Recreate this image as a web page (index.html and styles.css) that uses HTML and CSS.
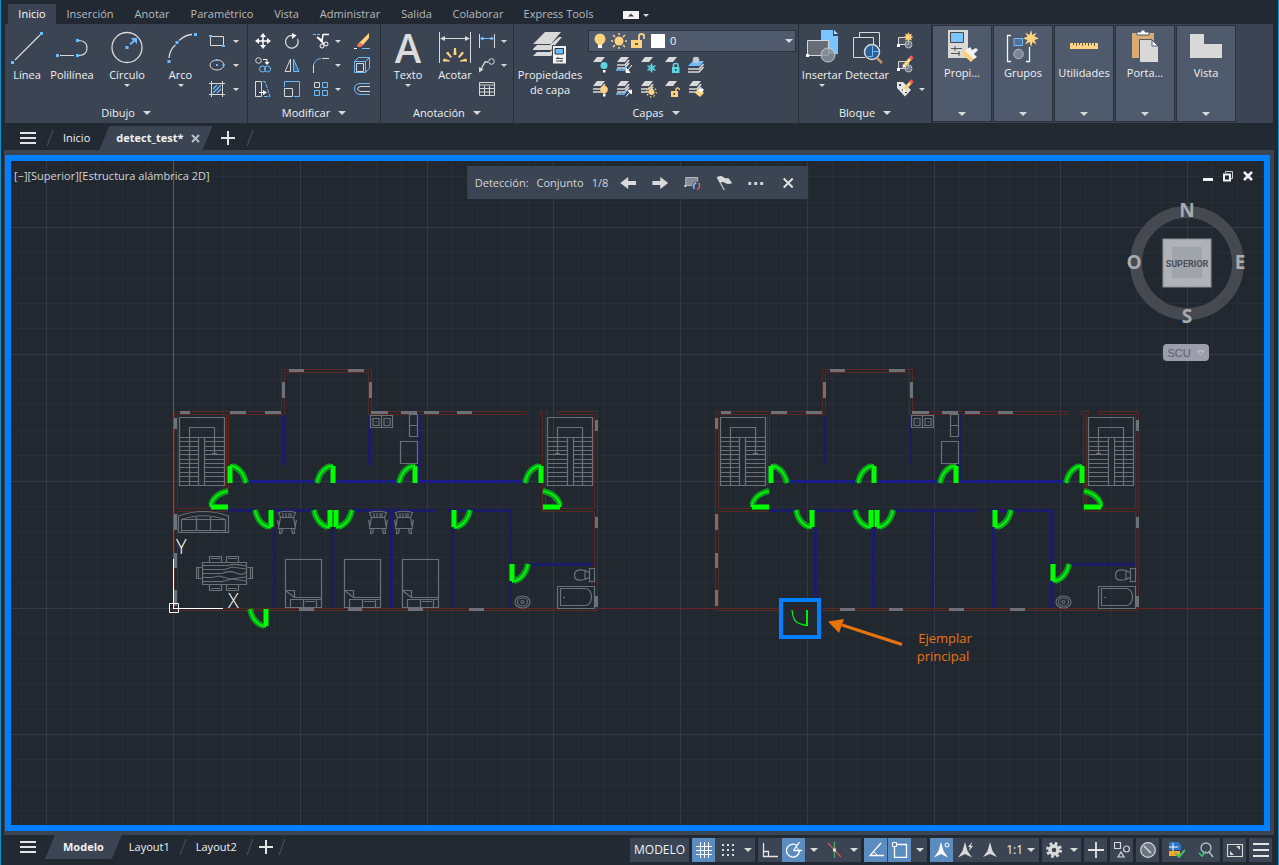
FILE: index.html
```html
<!DOCTYPE html>
<html lang="es">
<head>
<meta charset="utf-8">
<meta name="viewport" content="width=device-width, initial-scale=1">
<title>detect_test</title>
<link rel="stylesheet" href="styles.css">
</head>
<body>
<svg class="defs" width="0" height="0" aria-hidden="true">
  <defs>
    <symbol id="caret" viewBox="0 0 8 4"><path d="M0 0H8L4 4Z" fill="#d9d9d9"/></symbol>
    <symbol id="layers" viewBox="0 0 16 16">
      <path d="M5 1H13L9 6H1Z" fill="#d9d9d9"/><path d="M1 9H9L13 4M1 12H9L13 7" fill="none" stroke="#d9d9d9" stroke-width="1.6"/>
    </symbol>
    <symbol id="sheet" viewBox="0 0 16 16"><path d="M5 2H13L9 7H1Z" fill="#d9d9d9"/></symbol>
    <symbol id="pencil" viewBox="0 0 16 16">
      <path d="M6 11L13 3" stroke="#ffd27f" stroke-width="3.4"/><path d="M12 4L14.500 1.500" stroke="#ff5a4f" stroke-width="3.600"/><path d="M4.500 12.800L5 9.600 8 12Z" fill="#fff"/>
    </symbol>
    <symbol id="blockmini" viewBox="0 0 16 16">
      <path d="M1.500 4.500H11.500V11.500H1.500Z" fill="#4c5563" stroke="#d9d9d9"/><rect x="0" y="11" width="3" height="3" fill="#fff"/><circle cx="11.500" cy="11.500" r="3.500" fill="#8b929c" fill-opacity=".7" stroke="#b9bdc3"/>
    </symbol>
    <symbol id="menu" viewBox="0 0 16 12"><path d="M0 1H16M0 6H16M0 11H16" stroke="#e4e4e4" stroke-width="2"/></symbol>
    <symbol id="plus" viewBox="0 0 16 16"><path d="M8 1V15M1 8H15" stroke="#e4e4e4" stroke-width="2"/></symbol>
    <symbol id="slash" viewBox="0 0 8 16"><path d="M1 16L7 0" stroke="#4b5361"/></symbol>
    <symbol id="ucs" viewBox="0 0 16 16"><path d="M8 0L10.500 9 15 15 8 12 1 15 5.500 9Z" fill="#d9d9d9"/></symbol>

    <pattern id="grid" patternUnits="userSpaceOnUse" x="46" y="227" width="507" height="507">
      <path class="minor" d="M25.500 0V507M51.500 0V507M76.500 0V507M101.500 0V507M152.500 0V507M177.500 0V507M203.500 0V507M228.500 0V507M279.500 0V507M304.500 0V507M330.500 0V507M355.500 0V507M406.500 0V507M431.500 0V507M456.500 0V507M482.500 0V507"/>
      <path class="minor" d="M0 25.500H507M0 51.500H507M0 76.500H507M0 101.500H507M0 152.500H507M0 177.500H507M0 203.500H507M0 228.500H507M0 279.500H507M0 304.500H507M0 330.500H507M0 355.500H507M0 406.500H507M0 431.500H507M0 456.500H507M0 482.500H507"/>
      <path class="major" d="M.5 0V507M127.500 0V507M254.500 0V507M381.500 0V507M0 .5H507M0 127.500H507M0 254.500H507M0 381.500H507"/>
    </pattern>

    <g id="door">
      <path class="door-glow" d="M0 1V-16M2 -16Q13 -13 16 1"/>
      <path class="door-leaf" d="M0 1V-16"/><path class="door-arc" d="M0 -17Q13 -14 16 1"/>
    </g>
    <g id="stairs">
      <path d="M179.500 417.500H224.500V485.500H179.500ZM189.500 485V427.500H214.500V453.500M212 453.500H217M179.500 437.500H224.500M198.500 437.500V485M204.500 437.500V485"/>
      <path d="M179.500 441.500H198.500M179.500 446.500H198.500M179.500 450.500H198.500M179.500 454.500H198.500M179.500 459.500H198.500M179.500 463.500H198.500M179.500 467.500H198.500M179.500 472.500H198.500M179.500 476.500H198.500M179.500 481.500H198.500M204.500 441.500H224.500M204.500 446.500H224.500M204.500 450.500H224.500M204.500 454.500H224.500M204.500 459.500H224.500M204.500 463.500H224.500M204.500 467.500H224.500M204.500 472.500H224.500M204.500 476.500H224.500M204.500 481.500H224.500"/>
    </g>
    <g id="bed">
      <path d="M.5 .5H36.500V48.500H.5ZM.5 31.500H9.500V38.500H36.500M.5 31.500L9.500 38.500M9.500 40.500H36.500M5.500 40V48M18.500 40V48M31.500 40V48M6 40.500H17.500M20 42.500H30"/>
    </g>
    <g id="chair">
      <path d="M1.500 1.500Q10 -1 18.500 1.500L16.500 6.500H3.500ZM3.500 6L1.500 17.500H18.500L16.500 6M3 17.500L2.500 22.500H4.500L5.500 18M17 17.500L17.500 22.500H15.500L14.500 18M.5 9L2 16M19.500 9L18 16M6 2V6M9 2V6M12 2V6M14 2V6"/>
    </g>
    <g id="plan">
      <g class="wall">
        <path d="M281.500 411.500H174.500V610.500H597.500V411.500H557.500V414.500H594.500V508.500H545.500V414.500H547.500V411.500H540.500V414.500H542.500V511.500H594.500V608.500H177.500V511.500H228.500M177.500 508.500H226.500M177.500 508.500V414.500H226.500V490.500M284.500 414.500H228.500V490.500M281.500 414V369.500H371.500V411.500H526.500V414.500H368.500V372.500H284.500V414.500"/>
      </g>
      <g class="blue-line">
        <path d="M283.500 415V465M369.500 415V465M419 414V480M274.500 528V608M332.500 528V608M391.500 511V608M452.500 528V608M510.500 510V608"/>
        <path d="M228 510.500H255M273 510.500H314M352 510.500H436M448 510.500H512M530 564.500H594"/>
      </g>
      <path class="blue-bright" d="M247 481.500H318M335 481.500H400M417 481.500H525"/>
      <g class="window">
        <path d="M180 412.500H190M230 412.500H246M265 412.500H281M289 370.500H304M348 370.500H364M371 412.500H388M401 412.500H417M424 412.500H439M457 412.500H472M299 609.500H314M348 609.500H362M408 609.500H423M469 609.500H484"/>
        <path d="M283.500 382V398M370.500 382V398M175.500 418V429M175.500 514V530M175.500 553V568M175.500 590V606M596.500 420V431M596.500 517V528M596.500 596V607"/>
      </g>
      <g class="furniture">
        <use href="#stairs"/>
        <use href="#stairs" transform="translate(772 0) scale(-1 1)"/>
        <path d="M370.500 415.500H392.500V427.500H370.500ZM381.500 415V427M373 418.500H379V425.500H373ZM384 418.500H390V425.500H384ZM375.500 422H377M386.500 422H388M409.500 414.500H417.500V436.500H409.500ZM409.500 425.500H417.500M400.500 441.500H417.500V463.500H400.500Z"/>
        <path d="M557.500 586.500H594.500V608.500H557.500ZM560.500 588.500H586Q591.500 590 591.500 597T586 605.500H560.500ZM563 597.500H565M589.500 568.500H594.500V581.500H589.500ZM589 572.500L585 570.500Q575 568 574.500 575T585 579.500L589 577.500M585 570V580"/>
        <ellipse cx="522.500" cy="602" rx="7.500" ry="6"/><ellipse cx="522.500" cy="602" rx="5" ry="4"/><circle cx="522.500" cy="602" r="1.500"/>
      </g>
      <use href="#door" transform="translate(230 482)"/>
      <use href="#door" transform="translate(333 482) scale(-1 1)"/>
      <use href="#door" transform="translate(415 482) scale(-1 1)"/>
      <use href="#door" transform="translate(541 482) scale(-1 1)"/>
      <use href="#door" transform="translate(227 507) rotate(-90)"/>
      <use href="#door" transform="translate(544 507) scale(-1 1) rotate(-90)"/>
      <use href="#door" transform="translate(271 511) rotate(180)"/>
      <use href="#door" transform="translate(330 511) rotate(180)"/>
      <use href="#door" transform="translate(336 511) scale(1 -1)"/>
      <use href="#door" transform="translate(454 511) scale(1 -1)"/>
      <use href="#door" transform="translate(512 565) scale(1 -1)"/>
    </g>
  </defs>
</svg>

<header>
  <nav class="ribbon-tabs" aria-label="Cinta">
    <button class="rtab active">Inicio</button>
    <button class="rtab">Inserción</button>
    <button class="rtab">Anotar</button>
    <button class="rtab">Paramétrico</button>
    <button class="rtab">Vista</button>
    <button class="rtab">Administrar</button>
    <button class="rtab">Salida</button>
    <button class="rtab">Colaborar</button>
    <button class="rtab">Express Tools</button>
    <button class="minimize" aria-label="Minimizar cinta">
      <svg width="16" height="8" viewBox="0 0 16 8"><path d="M0 0H16V8H0Z" fill="#f2f2f2"/><path d="M5 5.500H11L8 2.500Z" fill="#444"/></svg>
      <svg width="6" height="3"><use href="#caret"/></svg>
    </button>
  </nav>

  <div class="ribbon">
    <section class="panel panel-draw">
      <div class="tools">
        <button class="big"><svg viewBox="0 0 32 32"><path d="M4 29L29 4" stroke="#d9d9d9" stroke-width="1.200"/><path d="M0 30h3v3h-3zM29 1h3v3h-3z" fill="#6cbcff"/></svg><span>Línea</span></button>
        <button class="big"><svg viewBox="0 0 32 32"><path d="M4 24.500H18M23 24.500Q31 24 31 17T23 9.500" fill="none" stroke="#d9d9d9" stroke-width="1.200"/><path d="M0 23h3v3h-3zM20 23h3v3h-3zM20 8h3v3h-3z" fill="#6cbcff"/></svg><span>Polilínea</span></button>
        <button class="big"><svg viewBox="0 0 32 32"><circle cx="16" cy="16.500" r="15" fill="none" stroke="#d9d9d9" stroke-width="1.300"/><path d="M14.500 15h3v3h-3zM20 7H26V13L23.500 10.500 20 14 18.500 12.500 22 9.500Z" fill="#6cbcff"/></svg><span>Círculo</span><svg class="caret"><use href="#caret"/></svg></button>
        <button class="big"><svg viewBox="0 0 32 32"><path d="M4 27Q5 18 10.500 14M14 9.500Q20 4 27 3.500" fill="none" stroke="#d9d9d9" stroke-width="1.300"/><path d="M2.500 29h3v3h-3zM10.500 10h3v3h-3zM29 2h3v3h-3z" fill="#6cbcff"/></svg><span>Arco</span><svg class="caret"><use href="#caret"/></svg></button>
        <div class="minis">
          <button class="mini drop" aria-label="Rectángulo"><svg viewBox="0 0 16 16"><path d="M1.500 3.500H14.500V12.500H1.500Z" fill="none" stroke="#d9d9d9"/><path d="M0 2h3v2H0zM13 12h3v2h-3z" fill="#6cbcff"/></svg><svg class="caret"><use href="#caret"/></svg></button>
          <button class="mini drop" aria-label="Elipse"><svg viewBox="0 0 16 16"><ellipse cx="8" cy="8" rx="7" ry="5" fill="none" stroke="#d9d9d9"/><path d="M7 7h2v2H7zM7 2h2v2H7zM13.500 7h2v2h-2z" fill="#6cbcff"/></svg><svg class="caret"><use href="#caret"/></svg></button>
          <button class="mini drop" aria-label="Sombreado"><svg viewBox="0 0 16 16"><path d="M2.500 0V16M13.500 0V16M0 2.500H16M0 13.500H16" stroke="#d9d9d9"/><path d="M4 8L8 4M4 12L12 4M8 12L12 8" stroke="#6cbcff" stroke-width="1.300"/></svg><svg class="caret"><use href="#caret"/></svg></button>
        </div>
      </div>
      <button class="title">Dibujo <svg class="caret wide"><use href="#caret"/></svg></button>
    </section>

    <section class="panel panel-modify">
      <div class="tools">
        <button class="mini" aria-label="Desplaza"><svg viewBox="0 0 16 16"><path d="M8 2V14M2 8H14" stroke="#fff" stroke-width="1.500"/><path d="M8 0L11 4H5ZM8 16L11 12H5ZM0 8L4 5V11ZM16 8L12 5V11Z" fill="#fff"/></svg></button>
        <button class="mini" aria-label="Gira"><svg viewBox="0 0 16 16"><path d="M8.500 2.500A6.300 6.300 0 1 0 13.500 6" fill="none" stroke="#d9d9d9" stroke-width="1.300"/><path d="M8 0L12.500 2.500 8 6Z" fill="#fff"/></svg></button>
        <button class="mini drop" aria-label="Recorta"><svg viewBox="0 0 16 16"><path d="M0 1.500H8" stroke="#6cbcff" stroke-dasharray="3 1"/><path d="M10 1.500H16M10 1L9 9M4 4L11 11" stroke="#fff" stroke-width="1.500"/><path d="M4 3L10 7 8 9Z" fill="#fff"/><circle cx="9" cy="13" r="2" fill="none" stroke="#fff"/><circle cx="13" cy="11" r="2" fill="none" stroke="#fff"/></svg><svg class="caret"><use href="#caret"/></svg></button>
        <button class="mini" aria-label="Borrar"><svg viewBox="0 0 16 16"><path d="M5 10L15 0V5L9 12Z" fill="#ffd27f"/><path d="M5.500 9L9 12 7 14H4L3 12Z" fill="#ff6a5f"/><path d="M0 15.500H3" stroke="#fff"/><path d="M8 15.500H16" stroke="#6cbcff"/></svg></button>
        <button class="mini" aria-label="Copia"><svg viewBox="0 0 16 16"><circle cx="3.500" cy="3.500" r="2.800" fill="none" stroke="#d9d9d9"/><g fill="none" stroke="#6cbcff"><circle cx="7.500" cy="12" r="3"/><circle cx="12.500" cy="12" r="3"/></g><path d="M8 2.500H12V5" fill="none" stroke="#fff"/><path d="M9.500 5H14.500L12 8Z" fill="#fff"/></svg></button>
        <button class="mini" aria-label="Simetría"><svg viewBox="0 0 16 16"><path d="M6.500 2V14.500H1Z" fill="none" stroke="#d9d9d9"/><path d="M9.500 2V14.500H15Z" fill="#376a98" stroke="#6cbcff"/></svg></button>
        <button class="mini drop" aria-label="Empalme"><svg viewBox="0 0 16 16"><path d="M.5 8V16M9 1.500H16" stroke="#d9d9d9"/><path d="M.5 8Q2 2 8 1.500" fill="none" stroke="#6cbcff"/></svg><svg class="caret"><use href="#caret"/></svg></button>
        <button class="mini" aria-label="Descomponer"><svg viewBox="0 0 16 16"><path d="M.5 4.500L4.500 .5H15.500V11L11.500 15.500M11.500 4.500L15.500 .5M.5 4.500H11.500V15.500" fill="none" stroke="#6cbcff"/><path d="M2.500 6.500H9.500V14.500H2.500Z" fill="none" stroke="#d9d9d9"/><path d="M.5 4.500V15.500H11.500" fill="none" stroke="#6cbcff"/></svg></button>
        <button class="mini" aria-label="Estira"><svg viewBox="0 0 16 16"><path d="M.5 .5H6.500V15.500H.5Z" fill="none" stroke="#d9d9d9"/><path d="M8 .5H10L15 15.500H8" fill="none" stroke="#6cbcff" stroke-dasharray="4 1"/><path d="M4 11.500H9" stroke="#fff"/><path d="M8 9L12 11.500 8 14Z" fill="#fff"/></svg></button>
        <button class="mini" aria-label="Escala"><svg viewBox="0 0 16 16"><path d="M.5 6V.5H15.500V15.500H10" fill="none" stroke="#6cbcff"/><path d="M.5 7.500H8.500V15.500H.5Z" fill="none" stroke="#d9d9d9"/></svg></button>
        <button class="mini drop" aria-label="Matriz"><svg viewBox="0 0 16 16"><g fill="none" stroke="#6cbcff"><path d="M9.500 1.500H14.500V6.500H9.500ZM1.500 9.500H6.500V14.500H1.500ZM9.500 9.500H14.500V14.500H9.500Z"/></g><path d="M1.500 1.500H6.500V6.500H1.500Z" fill="none" stroke="#d9d9d9"/></svg><svg class="caret"><use href="#caret"/></svg></button>
        <button class="mini" aria-label="Desfase"><svg viewBox="0 0 16 16"><path d="M16 2.500H6Q0 3 .5 8T6 13.500H16" fill="none" stroke="#6cbcff"/><path d="M16 5.500H7Q3 6 3.500 8T7 10.500H16" fill="none" stroke="#d9d9d9"/></svg></button>
      </div>
      <button class="title">Modificar <svg class="caret wide"><use href="#caret"/></svg></button>
    </section>

    <section class="panel panel-annotate">
      <div class="tools">
        <button class="big"><b class="glyph">A</b><span>Texto</span><svg class="caret"><use href="#caret"/></svg></button>
        <button class="big"><svg viewBox="0 0 32 32"><path d="M.5 1V32M31.500 1V32M3 7.500H29" stroke="#d9d9d9"/><path d="M1 7.500L6 5V10ZM31 7.500L26 5V10Z" fill="#d9d9d9"/><path d="M15 17H17L17.500 24H14.500ZM7 22L9 20.500 13 26 11.500 27ZM25 22L23 20.500 19 26 20.500 27ZM4 29L5 27.500 11 29.500V30.500H4ZM28 29L27 27.500 21 29.500V30.500H28Z" fill="#ffd27f"/></svg><span>Acotar</span></button>
        <div class="minis">
          <button class="mini drop" aria-label="Lineal"><svg viewBox="0 0 16 16"><path d="M.5 1V15M15.500 1V15" stroke="#d9d9d9"/><path d="M2 5.500H14M4 4L1.500 5.500 4 7ZM12 4L14.500 5.500 12 7Z" fill="#6cbcff" stroke="#6cbcff"/></svg><svg class="caret"><use href="#caret"/></svg></button>
          <button class="mini drop" aria-label="Directriz"><svg viewBox="0 0 16 16"><path d="M1 14L6 5H9" fill="none" stroke="#d9d9d9" stroke-width="1.300"/><circle cx="12.500" cy="4.500" r="2.800" fill="none" stroke="#d9d9d9"/><path d="M0 15.500V10L4.500 12.500Z" fill="#d9d9d9"/></svg><svg class="caret"><use href="#caret"/></svg></button>
          <button class="mini" aria-label="Tabla"><svg viewBox="0 0 16 16"><path d="M.5 1.500H15.500V14.500H.5ZM0 4H16M.5 7.500H15.500M.5 11H15.500M5.500 5V14M10.500 5V14" fill="none" stroke="#d9d9d9"/></svg></button>
        </div>
      </div>
      <button class="title">Anotación <svg class="caret wide"><use href="#caret"/></svg></button>
    </section>

    <section class="panel panel-layers">
      <div class="tools">
        <button class="big"><svg viewBox="0 0 32 32"><path d="M11 1H27L17 13H-1ZM-1 18L3 14H16L25 6H28L17 19H-1ZM-1 25L3 21H16L23 14H27L17 25Z" fill="#d9d9d9"/><path d="M18.500 14.500H32.500V33H18.500Z" fill="#f2f2f2" stroke="#3b4453"/><path d="M21 17.500H29.500V23H21Z" fill="#6cbcff" stroke="#333"/><path d="M22 27.500H29M22 30H29M24 26V28M27 29V31" stroke="#444"/></svg><span>Propiedades<br>de capa</span></button>
        <div class="layer-side">
          <div class="layer-combo">
            <svg viewBox="0 0 16 16"><circle cx="8" cy="6" r="5.500" fill="#ffd27f"/><path d="M6 11H10V15H6Z" fill="#fff"/><path d="M4 9H12L10 12H6Z" fill="#ffd27f"/></svg>
            <svg viewBox="0 0 16 16"><circle cx="8" cy="8" r="4.500" fill="#ffd27f"/><path d="M8 0V2M8 14V16M0 8H2M14 8H16M2 2L4 4M12 12L14 14M14 2L12 4M4 12L2 14" stroke="#ffd27f" stroke-width="1.500"/></svg>
            <svg viewBox="0 0 16 16"><path d="M1 7H12V15H1Z" fill="#ffd27f"/><path d="M9 7V3Q9 1 11.500 1T14 3V6" fill="none" stroke="#ffd27f" stroke-width="1.800"/><path d="M5 10H8V12H5Z" fill="#6b5a34"/></svg>
            <i class="swatch"></i>
            <select aria-label="Capa"><option>0</option></select>
            <svg class="caret wide"><use href="#caret"/></svg>
          </div>
          <div class="layer-grid">
            <button class="mini" aria-label="Desactivar"><svg viewBox="0 0 16 16"><use href="#sheet" y="-2"/><circle cx="12" cy="8.500" r="3.500" fill="#5ad9e2"/><path d="M11 13H13.500V15.500H11Z" fill="#fff"/></svg></button>
            <button class="mini" aria-label="Aislar"><svg viewBox="0 0 16 16"><use href="#layers" y="-1"/><path d="M0 13H8L10 10" fill="none" stroke="#6cbcff" stroke-width="1.600"/><path d="M16 8L11 14M10 11V15.500H14Z" stroke="#fff" fill="#fff"/></svg></button>
            <button class="mini" aria-label="Inutilizar"><svg viewBox="0 0 16 16"><use href="#sheet" y="-2"/><path d="M11.500 6.500V15.500M7.500 8.500L15.500 13.500M15.500 8.500L7.500 13.500" stroke="#5ad9e2" stroke-width="1.400"/><circle cx="11.500" cy="11" r="2.500" fill="none" stroke="#5ad9e2"/></svg></button>
            <button class="mini" aria-label="Bloquear"><svg viewBox="0 0 16 16"><use href="#sheet" y="-2"/><path d="M8 10H15.500V16H8Z" fill="#5ad9e2"/><path d="M9.500 10V8Q9.500 6.500 11.800 6.500T14 8V10" fill="none" stroke="#5ad9e2" stroke-width="1.500"/><path d="M11 12H12.500V14H11Z" fill="#245"/></svg></button>
            <button class="mini" aria-label="Definir actual"><svg viewBox="0 0 16 16"><path d="M5 4H16L12 9H0Z" fill="#6cbcff"/><path d="M0 12H11L15.500 7M0 15H11L15.500 10" fill="none" stroke="#d9d9d9" stroke-width="1.600"/><circle cx="8" cy="3" r="3.300" fill="#c4c7cb"/></svg></button>
            <button class="mini" aria-label="Activar todas"><svg viewBox="0 0 16 16"><use href="#layers" y="-1"/><circle cx="12" cy="8.500" r="3.800" fill="#ffd27f"/><path d="M11 12.500H13.500V15.500H11Z" fill="#fff"/></svg></button>
            <button class="mini" aria-label="Desaislar"><svg viewBox="0 0 16 16"><use href="#layers" y="-1"/><path d="M0 13H8L10 10" fill="none" stroke="#6cbcff" stroke-width="1.600"/><path d="M10 15.500L14 11M15.500 9V13L12 9.500Z" stroke="#fff" fill="#fff"/></svg></button>
            <button class="mini" aria-label="Reutilizar"><svg viewBox="0 0 16 16"><use href="#layers" y="-1"/><circle cx="11.500" cy="11" r="3" fill="#ffd27f"/><circle cx="11.500" cy="11" r="4.800" fill="none" stroke="#ffd27f" stroke-width="1.200" stroke-dasharray="1.500 2.200"/></svg></button>
            <button class="mini" aria-label="Desbloquear"><svg viewBox="0 0 16 16"><use href="#sheet" y="-2"/><path d="M7 10H14V16H7Z" fill="#ffd27f"/><path d="M12 10V8Q12 7 13.700 7T15.500 9" fill="none" stroke="#ffd27f" stroke-width="1.300"/><path d="M9.500 12H11V14H9.500Z" fill="#543"/></svg></button>
            <button class="mini" aria-label="Igualar capa"><svg viewBox="0 0 16 16"><use href="#layers" y="-1"/><path d="M9 9L12 8 16 12 12 16 7 12Z" fill="#ffd27f"/><path d="M10 9L14 7 16 9 13 12Z" fill="#fff"/></svg></button>
          </div>
        </div>
      </div>
      <button class="title">Capas <svg class="caret wide"><use href="#caret"/></svg></button>
    </section>

    <section class="panel panel-block">
      <div class="tools">
        <button class="big"><svg viewBox="0 0 32 32"><path d="M15 -1H27V5H32V23H15Z" fill="#7cc4ff"/><path d="M28 -1L32 3H28Z" fill="#b9e0ff"/><path d="M1.500 9.500H22.500V24.500H1.500Z" fill="#666d78" stroke="#d9d9d9"/><rect x="0" y="23" width="3" height="3" fill="#fff"/><circle cx="22" cy="24" r="7" fill="#8b929c" fill-opacity=".8" stroke="#c9ccd0"/></svg><span>Insertar</span><svg class="caret"><use href="#caret"/></svg></button>
        <button class="big"><svg viewBox="0 0 32 32"><path d="M14 26.500H2.500V6.500H22.500V14M8.500 6V1.500H28.500V16" fill="none" stroke="#d9d9d9"/><circle cx="21" cy="21" r="7.500" fill="#2c5f92" stroke="#d9d9d9" stroke-width="1.500"/><path d="M21.500 15V25.500H17M22 20.500H28" stroke="#6cbcff" fill="none"/><path d="M26 27L31 32" stroke="#c89264" stroke-width="2.500"/></svg><span>Detectar</span></button>
        <div class="minis">
          <button class="mini" aria-label="Crear bloque"><svg viewBox="0 0 16 16"><use href="#blockmini"/><path d="M11.500 -1L12.500 1.500 15 .5 14 3 16.500 4 14 5 15 7.500 12.500 6.500 11.500 9 10.500 6.500 8 7.500 9 5 6.500 4 9 3 8 .5 10.500 1.500Z" fill="#ffd27f"/></svg></button>
          <button class="mini" aria-label="Editar bloque"><svg viewBox="0 0 16 16"><use href="#blockmini"/><use href="#pencil" x="1" y="-2"/></svg></button>
          <button class="mini drop" aria-label="Editar atributos"><svg viewBox="0 0 16 16"><path d="M0 1H6L14 9 8 15.500 0 7Z" fill="#e4e4e4"/><path d="M2 3H4V5H2ZM5 8H7V10H5ZM8 11H10V12H8Z" fill="#3b4453"/><use href="#pencil" x="1" y="-2"/></svg><svg class="caret"><use href="#caret"/></svg></button>
        </div>
      </div>
      <button class="title">Bloque <svg class="caret wide"><use href="#caret"/></svg></button>
    </section>

    <div class="tiles">
      <button class="tile"><svg viewBox="0 0 32 32"><path d="M2 0H22V28H2Z" fill="#d9d9d9"/><path d="M4.500 2.500H17.500V12.500H4.500Z" fill="#7cc4ff" stroke="#444"/><path d="M5 18.500H16M5 23.500H14M9 16V21M13 21V26" stroke="#555"/><path d="M15 23L20 19 29 28 25 32Z" fill="#ffd27f"/><path d="M19 21L24 17 26 20 30 18 32 20 28 24 31 27 28 29Z" fill="#f4f4f4"/></svg><span>Propi...</span><svg class="caret wide"><use href="#caret"/></svg></button>
      <button class="tile"><svg viewBox="0 0 32 32"><path d="M4 5.500H.5V31.500H4M19 31.500H22.500V17" fill="none" stroke="#f2f2f2" stroke-width="1.300"/><path d="M7 8.500H15.500V15.500H7Z" fill="#4d7094" stroke="#6cbcff"/><circle cx="11.500" cy="24" r="4.700" fill="#7d8694" stroke="#b9bdc3"/><path d="M24 0L25.500 5 29.500 2.500 27.500 6.500 32 8.500 27.500 10 29.500 14.500 25.500 12 24 17 22.500 12 18 14.500 20.500 10 16 8.500 20.500 6.500 18 2.500 22.500 5Z" fill="#ffd27f"/></svg><span>Grupos</span><svg class="caret wide"><use href="#caret"/></svg></button>
      <button class="tile"><svg viewBox="0 0 32 32"><path d="M2 13H30V19H2Z" fill="#ffd27f"/><path d="M5.500 13V15M8.500 13V16M11.500 13V15M14.500 13V16M17.500 13V15M20.500 13V16M23.500 13V15M26.500 13V16" stroke="#5d5a4c"/></svg><span>Utilidades</span><svg class="caret wide"><use href="#caret"/></svg></button>
      <button class="tile"><svg viewBox="0 0 32 32"><path d="M3 3H25V28H3Z" fill="#d8ab74"/><path d="M8 5V2H12V0H16V2H20V5Z" fill="#fff" stroke="#4f5b6d"/><path d="M10.500 9.500H23L29.500 16V32.500H10.500Z" fill="#d9d9d9" stroke="#4f5b6d"/><path d="M23 10V16H29Z" fill="#fff" stroke="#4f5b6d"/></svg><span>Porta...</span><svg class="caret wide"><use href="#caret"/></svg></button>
      <button class="tile"><svg viewBox="0 0 32 32"><path d="M0 4H14V14H32V28H0Z" fill="#d9d9d9"/></svg><span>Vista</span><svg class="caret wide"><use href="#caret"/></svg></button>
    </div>
  </div>

  <nav class="file-tabs" aria-label="Archivos">
    <button class="plain" aria-label="Menú"><svg width="16" height="12"><use href="#menu"/></svg></button>
    <svg class="slash"><use href="#slash"/></svg>
    <button class="ftab">Inicio</button>
    <button class="ftab active">detect_test* <svg width="9" height="9" viewBox="0 0 9 9"><path d="M1 1L8 8M8 1L1 8" stroke="#b9bdc3" stroke-width="2"/></svg></button>
    <button class="plain" aria-label="Nuevo dibujo"><svg width="16" height="16"><use href="#plus"/></svg></button>
    <svg class="slash"><use href="#slash"/></svg>
  </nav>
</header>

<main class="frame">
  <div class="viewport">
    <svg class="drawing" role="img" aria-label="Planta con puertas detectadas">
      <g transform="translate(-11 -161)">
        <rect x="0" y="0" width="4000" height="3000" fill="url(#grid)"/>
        <path d="M597 608.500H4000" stroke="#702024"/>
        <use href="#plan"/>
        <use href="#plan" x="541"/>
        <path d="M173.500 0V608" stroke="#2c7a2c"/>
        <g class="furniture">
          <use href="#bed" x="285" y="559"/><use href="#bed" x="344" y="559"/><use href="#bed" x="402" y="559"/>
          <use href="#chair" x="277" y="511"/><use href="#chair" x="368" y="511"/><use href="#chair" x="394" y="511"/>
          <path d="M178.500 532.500V516Q203 507 228.500 516V532.500H225.500V519.500M181.500 532.500V519.500Q203 512 225.500 519.500M178.500 532.500H228.500M181.500 530.500H225.500M196.500 516V530M210.500 516V530M181.500 519.500H225.500"/>
          <path d="M202.500 562.500H246.500V584.500H202.500ZM209.500 562V556.500H221.500V562M226.500 562V556.500H238.500V562M209.500 585V590.500H221.500V585M226.500 585V590.500H238.500V585M201.500 567.500H196.500V578.500H201.500M198.500 567V578M247.500 567.500H252.500V578.500H247.500M250.500 567V578M211 558.500H220M228 558.500H237M211 588.500H220M228 588.500H237"/>
          <path d="M203 565.500H228Q234 563 246 566M203 569.500H225L232 567 246 569M203 573.500H222Q229 570 236 573T246 572M203 577.500H212L219 576 230 579 246 577M203 581.500H222L232 579 246 581"/>
        </g>
        <use href="#door" transform="translate(266 610) rotate(180)"/>
        <g stroke="#fff" fill="none"><path d="M169.500 603.500H178.500V612.500H169.500ZM173.500 559V608M173 608.500H223"/></g>
        <text class="axis" x="176" y="554">Y</text><text class="axis" x="228" y="608">X</text>
        <rect x="781" y="600" width="38" height="37" fill="#222830" stroke="#0080ff" stroke-width="4"/>
        <path d="M791 608.500H811" stroke="#3c1f22" stroke-width="2"/>
        <path d="M792 610Q793 621 798 623T806.500 625.500" fill="none" stroke="#00f000" stroke-width="1.300"/>
        <path d="M807 610V626" stroke="#00f000" stroke-width="2"/>
        <path d="M842 625L902 644.500" stroke="#e8730e" stroke-width="3"/><path d="M828 621.500L844 619 839 633Z" fill="#e8730e"/>
        <text class="note" x="945" y="643">Ejemplar</text><text class="note" x="943" y="661">principal</text>
      </g>
    </svg>

    <div class="view-label">[−][Superior][Estructura alámbrica 2D]</div>

    <div class="detect-bar">
      <span>Detección:</span><span>Conjunto</span><span>1/8</span>
      <button aria-label="Anterior"><svg viewBox="0 0 16 16"><path d="M0 8L8 2V6H16V10H8V14Z" fill="#d9d9d9"/></svg></button>
      <button aria-label="Siguiente"><svg viewBox="0 0 16 16"><path d="M16 8L8 2V6H0V10H8V14Z" fill="#d9d9d9"/></svg></button>
      <button aria-label="Convertir"><svg viewBox="0 0 16 16"><path d="M1.500 2.500H13.500V10.500H1.500Z" fill="#868c95" stroke="#b4b8bd"/><path d="M0 10H2V12H0Z" fill="#ddd"/><circle cx="12.500" cy="11" r="4.500" fill="#3b4453"/><path d="M12 7.500Q8 10 10 14" fill="none" stroke="#6cbcff" stroke-width="1.600"/><path d="M13 14.500Q17 12 14.500 8" fill="none" stroke="#e8605a" stroke-width="1.600"/></svg></button>
      <button aria-label="Marcar"><svg viewBox="0 0 16 16"><path d="M1 2L8 15" stroke="#b4b8bd" stroke-width="1.500"/><path d="M1 2Q5 0 7 2T12 3L16 8Q12 10 9 8T4 8Z" fill="#d9d9d9"/></svg></button>
      <button aria-label="Más"><svg viewBox="0 0 16 16"><path d="M0 7H3V10H0ZM6 7H9V10H6ZM12 7H15V10H12Z" fill="#d0d2d5"/></svg></button>
      <button aria-label="Cerrar"><svg viewBox="0 0 16 16"><path d="M3.500 3.500L12.500 12.500M12.500 3.500L3.500 12.500" stroke="#e0e0e0" stroke-width="2"/></svg></button>
    </div>

    <div class="win-buttons">
      <button aria-label="Minimizar"><svg viewBox="0 0 12 12"><path d="M1 8H11V11H1Z" fill="#f2f2f2"/></svg></button>
      <button aria-label="Restaurar"><svg viewBox="0 0 12 12"><path d="M3.500 3V1.500H10.500V8.500H9" fill="none" stroke="#d0d0d0"/><path d="M2 4.500H8V10.500H2Z" fill="none" stroke="#f2f2f2" stroke-width="2"/></svg></button>
      <button aria-label="Cerrar"><svg viewBox="0 0 12 12"><path d="M2 2L10 10M10 2L2 10" stroke="#f2f2f2" stroke-width="2.500"/></svg></button>
    </div>

    <div class="cube">
      <svg width="122" height="126" viewBox="0 0 122 126">
        <circle cx="62" cy="63" r="51" fill="none" stroke="#464a50" stroke-width="12"/>
        <rect x="38" y="39" width="48" height="48" fill="#b0b2b5" stroke="#8e9195"/><rect x="47" y="47" width="30" height="31" fill="#a0a4ab"/>
        <g class="compass"><text x="62" y="17">N</text><text x="62" y="123">S</text><text x="9" y="69">O</text><text x="115" y="69">E</text></g>
        <text class="cube-face" x="62" y="67">SUPERIOR</text>
      </svg>
      <button class="scu">SCU <svg width="9" height="6" viewBox="0 0 9 6"><path d="M1 1H8L4.500 5Z" fill="none" stroke="#c4c5cf"/></svg></button>
    </div>
  </div>
</main>

<footer class="status">
  <nav class="file-tabs layouts" aria-label="Presentaciones">
    <button class="plain" aria-label="Menú"><svg width="16" height="12"><use href="#menu"/></svg></button>
    <button class="ftab active">Modelo</button>
    <button class="ftab">Layout1</button>
    <svg class="slash"><use href="#slash"/></svg>
    <button class="ftab">Layout2</button>
    <svg class="slash"><use href="#slash"/></svg>
    <button class="plain" aria-label="Nueva presentación"><svg width="16" height="16"><use href="#plus"/></svg></button>
    <svg class="slash"><use href="#slash"/></svg>
  </nav>
  <div class="status-tools">
    <div class="sgroup"><button class="stext model">MODELO</button></div>
    <div class="sgroup">
      <button class="sbtn on" aria-label="Rejilla"><svg viewBox="0 0 16 16"><path d="M4.500 0V16M8.500 0V16M12.500 0V16M0 4.500H16M0 8.500H16M0 12.500H16" stroke="#fff"/></svg></button>
      <button class="sbtn" aria-label="Forzado"><svg viewBox="0 0 16 16"><path d="M2 3H14M2 8H14M2 13H14" stroke="#d9d9d9" stroke-width="2" stroke-dasharray="2 3"/></svg></button>
      <button class="scaret" aria-label="Opciones de forzado"><svg class="caret wide"><use href="#caret"/></svg></button>
    </div>
    <div class="sgroup">
      <button class="sbtn" aria-label="Orto"><svg viewBox="0 0 16 16"><path d="M1.500 1V14.500H16M1.500 9.500H6.500V14" fill="none" stroke="#e4e4e4" stroke-width="1.300"/></svg></button>
      <button class="sbtn on" aria-label="Polar"><svg viewBox="0 0 16 16"><path d="M11 3.500A6.500 6.500 0 1 0 13.500 9M7.500 8.500H16M7.500 8.500L13.500 0" fill="none" stroke="#fff" stroke-width="1.300"/><path d="M10 5Q13 6 13 10" fill="none" stroke="#fff"/></svg></button>
      <button class="scaret" aria-label="Opciones polares"><svg class="caret wide"><use href="#caret"/></svg></button>
      <button class="sbtn" aria-label="Isométrico"><svg viewBox="0 0 16 16"><path d="M8.500 0V16" stroke="#4fae6e" stroke-width="1.300"/><path d="M2 1L15 15" stroke="#d0505a" stroke-width="1.300"/><path d="M7 6.500H10V9.500H7Z" fill="#ddd"/></svg></button>
      <button class="scaret" aria-label="Planos isométricos"><svg class="caret wide"><use href="#caret"/></svg></button>
    </div>
    <div class="sgroup">
      <button class="sbtn on" aria-label="Rastreo"><svg viewBox="0 0 16 16"><path d="M13 1L2 13.500H16" fill="none" stroke="#fff" stroke-width="1.300"/><path d="M5 9L9 13" stroke="#fff"/></svg></button>
      <button class="sbtn on" aria-label="Referencia"><svg viewBox="0 0 16 16"><path d="M5 2.500H14.500V15.500H2.500V5" fill="none" stroke="#fff" stroke-width="1.300"/><path d="M.5 .5H4.500V4.500H.5Z" fill="none" stroke="#fff"/></svg></button>
      <button class="scaret" aria-label="Opciones de referencia"><svg class="caret wide"><use href="#caret"/></svg></button>
    </div>
    <div class="sgroup">
      <button class="sbtn on" aria-label="Visibilidad de anotación"><svg viewBox="0 0 16 16"><path d="M7 0L9.500 9 14 15.500 7 12 0 15.500 4.500 9Z" fill="#fff"/><circle cx="13" cy="3" r="2" fill="none" stroke="#fff"/></svg></button>
      <button class="sbtn" aria-label="Escala automática"><svg viewBox="0 0 16 16"><path d="M7 0L9.500 9 14 15.500 7 12 0 15.500 4.500 9ZM14 0L10 5H12L11 9 15 4H13Z" fill="#d9d9d9"/></svg></button>
      <button class="sbtn" aria-label="Escala"><svg viewBox="0 0 16 16"><use href="#ucs"/></svg></button>
      <button class="stext">1:1 <svg class="caret wide"><use href="#caret"/></svg></button>
    </div>
    <div class="sgroup">
      <button class="sbtn" aria-label="Espacio de trabajo"><svg viewBox="0 0 16 16"><circle cx="8" cy="8" r="4" fill="none" stroke="#d9d9d9" stroke-width="3.500"/><circle cx="8" cy="8" r="6.500" fill="none" stroke="#d9d9d9" stroke-width="3" stroke-dasharray="2.600 2.505"/></svg></button>
      <button class="scaret" aria-label="Opciones"><svg class="caret wide"><use href="#caret"/></svg></button>
    </div>
    <div class="sgroup"><button class="sbtn" aria-label="Añadir"><svg viewBox="0 0 16 16"><path d="M8 0V16M0 8H16" stroke="#e4e4e4" stroke-width="1.800"/></svg></button></div>
    <div class="sgroup"><button class="sbtn" aria-label="Propiedades rápidas"><svg viewBox="0 0 16 16"><path d="M.5 .5H6.500V6.500H.5ZM4 15L7 10 10 15Z" fill="none" stroke="#d9d9d9" stroke-width="1.200"/><circle cx="12.500" cy="7" r="3" fill="none" stroke="#d9d9d9" stroke-width="1.200"/></svg></button></div>
    <div class="sgroup"><button class="sbtn" aria-label="Aislar objetos"><svg viewBox="0 0 16 16"><circle cx="8" cy="8" r="7.300" fill="#6d7683" stroke="#d9d9d9" stroke-width="1.200"/><path d="M4 4L11 11" stroke="#d9d9d9" stroke-width="1.500"/></svg></button></div>
    <div class="sgroup wide-group">
      <button class="sbtn" aria-label="Estado del dibujo"><svg viewBox="0 0 16 16"><path d="M0 0H9L12 3V8H0Z" fill="#2c74c4"/><path d="M0 9H11V14H0Z" fill="#f3a72a"/><path d="M4 1V9M0 5H9" stroke="#fff"/><path d="M6 11L10 15 16 8" fill="none" stroke="#3fc06c" stroke-width="2"/></svg></button>
      <button class="sbtn" aria-label="Buscar"><svg viewBox="0 0 16 16"><circle cx="8" cy="6" r="5" fill="none" stroke="#b9bdc3" stroke-width="1.300"/><path d="M11 10L15 15" stroke="#b9bdc3" stroke-width="1.600"/><path d="M1 11L4 14 8 9" fill="none" stroke="#3fc06c" stroke-width="1.600"/></svg></button>
    </div>
    <div class="sgroup"><button class="sbtn" aria-label="Pantalla limpia"><svg viewBox="0 0 16 16"><path d="M.5 2.500H15.500V14.500H.5Z" fill="none" stroke="#d9d9d9" stroke-width="1.200"/><path d="M9 4H13V8ZM3 9V13H7Z" fill="#d9d9d9"/></svg></button></div>
    <div class="sgroup"><button class="sbtn" aria-label="Personalización"><svg viewBox="0 0 16 16"><path d="M0 2H16M0 8H16M0 14H16" stroke="#e4e4e4" stroke-width="2"/></svg></button></div>
  </div>
</footer>
</body>
</html>
```
FILE: styles.css
```css
:root {
  --dark: #222933;
  --panel: #3b4453;
  --tile: #4f5b6d;
  --text: #f0f1f2;
  --muted: #b7babf;
  --accent: #0080ff;
}
* { box-sizing: border-box; }
body {
  margin: 0;
  min-height: 100vh;
  display: flex;
  flex-direction: column;
  background: var(--dark);
  color: var(--text);
  border: solid #0c93cf;
  border-width: 0 1px;
  font: 11px/16px "Open Sans", "Noto Sans", sans-serif;
}
button {
  margin: 0;
  padding: 0;
  border: 0;
  background: none;
  color: inherit;
  font: inherit;
  white-space: nowrap;
  display: flex;
  align-items: center;
  justify-content: center;
}
svg { display: block; flex: none; }
.defs { position: absolute; }
.caret { width: 6px; height: 3px; }
.caret.wide { width: 8px; height: 4px; }

/* Ribbon tabs */
.ribbon-tabs {
  display: grid;
  grid-template-columns: 48px 68px 56px 84px 45px 82px 51px 72px 89px 46px;
  padding: 4px 0 0 7px;
  color: var(--muted);
}
.rtab { height: 20px; }
.rtab.active { background: var(--panel); color: #fff; }
.minimize { gap: 4px; padding-top: 2px; justify-content: flex-end; }

/* Ribbon */
.ribbon {
  display: flex;
  background: var(--panel);
  margin: 0 5px 0 4px;
}
.panel {
  display: flex;
  flex-direction: column;
  border-right: 1px solid #262d37;
  padding-top: 5px;
}
.tools { display: grid; height: 74px; }
.title { gap: 8px; height: 20px; }
.big {
  flex-direction: column;
  justify-content: flex-start;
  gap: 2px;
  padding-top: 2px;
}
.big > svg:first-child, .glyph { width: 32px; height: 32px; overflow: visible; }
.big > span { padding-top: 2px; line-height: 15px; text-align: center; }
.glyph { font: 600 40px/34px "Open Sans", sans-serif; text-align: center; color: #dcdcdc; }
.minis { display: grid; grid-template-rows: repeat(3, 24px); }
.mini { height: 24px; justify-content: flex-start; gap: 6px; }
.mini > svg:first-child { width: 16px; height: 16px; overflow: visible; }

.panel-draw { width: 243px; }
.panel-draw .tools { grid-template-columns: 40px 50px 60px 47px 38px; padding-left: 2px; }
.panel-draw .minis { padding-left: 5px; }
.panel-draw .mini { gap: 8px; }
.panel-modify { width: 133px; }
.panel-modify .tools { grid-template: repeat(3, 24px) / 29px 29px 41px 20px; padding-left: 7px; }
.panel-annotate { width: 133px; }
.panel-annotate .tools { grid-template-columns: 46px 46px 30px; padding-left: 4px; column-gap: 1px; }
.panel-layers { width: 285px; }
.panel-layers .tools { grid-template-columns: 72px 208px; column-gap: 2px; }
.panel-block { width: 133px; }
.panel-block .tools { grid-template-columns: 46px 44px 40px; }
.panel-block .minis { padding-left: 8px; }

.layer-side { padding-top: 1px; }
.layer-combo {
  display: flex;
  align-items: center;
  height: 22px;
  padding: 0 2px 0 3px;
  gap: 3px;
  background: var(--tile);
  border: 1px solid #2a313c;
}
.layer-combo > svg:not(.caret) { width: 16px; height: 16px; }
.swatch { width: 14px; height: 14px; background: #fff; margin-left: 2px; }
.layer-combo select {
  flex: 1;
  appearance: none;
  border: 0;
  background: none;
  color: inherit;
  font: inherit;
  padding: 0 2px;
}
.layer-grid {
  display: grid;
  grid-template: repeat(2, 24px) / repeat(5, 24px);
  padding: 1px 0 0 4px;
}

.tiles { display: flex; gap: 1px; padding: 1px 0; }
.tile {
  width: 60px;
  height: 97px;
  flex-direction: column;
  justify-content: flex-start;
  background: var(--tile);
  border: 1px solid #2a313c;
  padding: 4px 0 5px;
}
.tile > svg:first-child { width: 32px; height: 32px; overflow: visible; }
.tile span { padding-top: 3px; }
.tile .caret { margin-top: auto; }

/* Document and layout tabs */
.file-tabs { display: flex; height: 27px; padding: 3px 0 0 15px; }
.plain { width: 24px; }
.slash { width: 8px; height: 16px; align-self: center; }
.ftab { padding: 0 9px; }
.ftab.active {
  background: var(--panel);
  font-weight: 700;
  padding: 0 12px 0 17px;
  gap: 8px;
  clip-path: polygon(10px 0, 100% 0, calc(100% - 10px) 100%, 0 100%);
}
header .slash:first-of-type { margin-left: 6px; }
header .plain:nth-of-type(4) { margin-left: 4px; }
header .slash:last-child { margin-left: 6px; }

/* Drawing viewport */
.frame {
  flex: 1;
  display: flex;
  margin: 0 4px 0 3px;
  padding: 5px 4px 4px 1px;
  background: var(--panel);
}
.viewport {
  position: relative;
  flex: 1;
  min-height: 480px;
  border: 6px solid var(--accent);
  background: #222830;
  overflow: hidden;
}
.drawing { position: absolute; inset: 0; width: 100%; height: 100%; }
.minor { stroke: #282d37; fill: none; }
.major { stroke: #34384a; fill: none; }
.wall { stroke: #5a281f; fill: none; }
.blue-line { stroke: #1a1c68; stroke-width: 3; fill: none; }
.blue-bright { stroke: #1b1d86; stroke-width: 3; fill: none; }
.window { stroke: #6e7177; stroke-width: 3; fill: none; }
.furniture { stroke: #6c7077; stroke-width: 1.2; fill: none; }
.door-glow { stroke: #0b9a1a; stroke-width: 6; fill: none; }
.door-leaf { stroke: #00ff00; stroke-width: 4; fill: none; }
.door-arc { stroke: #00f00a; stroke-width: 2; fill: none; }
.axis { fill: #fff; font: 300 20px/20px "Open Sans", sans-serif; }
.note { fill: #e8730e; font: 13px/18px "Open Sans", sans-serif; text-anchor: middle; }

.view-label { position: absolute; left: 3px; top: 7px; color: #d4d5d7; }

.detect-bar {
  position: absolute;
  top: 5px;
  left: 50%;
  transform: translateX(-50%);
  display: flex;
  align-items: center;
  gap: 8px;
  height: 33px;
  padding: 0 8px;
  background: var(--panel);
  color: #d4d5d7;
  white-space: nowrap;
}
.detect-bar button { width: 24px; height: 24px; }
.detect-bar button svg { width: 16px; height: 16px; }

.win-buttons { position: absolute; top: 9px; right: 10px; display: flex; gap: 8px; }
.win-buttons svg { width: 12px; height: 12px; }

.cube {
  position: absolute;
  top: 39px;
  right: 17px;
  display: flex;
  flex-direction: column;
  align-items: center;
  gap: 18px;
}
.cube svg { overflow: visible; }
.compass { fill: #a9abae; font: 700 19px/20px "Open Sans", sans-serif; text-anchor: middle; }
.cube-face { fill: #4a4f57; font: 700 9px/12px Roboto, sans-serif; text-anchor: middle; }
.scu {
  width: 46px;
  height: 17px;
  gap: 5px;
  border-radius: 4px;
  background: #9b9dab;
  color: #5d606d;
  font: 11px/16px "Liberation Sans", sans-serif;
}

/* Status bar */
.status { display: flex; justify-content: space-between; height: 30px; }
.layouts { height: 24px; padding-top: 0; }
.layouts .active { padding: 0 18px; margin: 0 -2px 0 5px; }
.status-tools { display: flex; align-items: center; gap: 3px; padding-right: 6px; font-size: 12px; }
.sgroup { display: flex; gap: 1px; height: 24px; background: var(--panel); }
.sbtn { width: 23px; height: 24px; }
.sbtn svg { width: 16px; height: 16px; }
.sbtn.on { background: #5b8cc0; }
.scaret { width: 15px; }
.stext { gap: 4px; padding: 0 4px; }
.wide-group { gap: 6px; padding: 0 3px; }
```
